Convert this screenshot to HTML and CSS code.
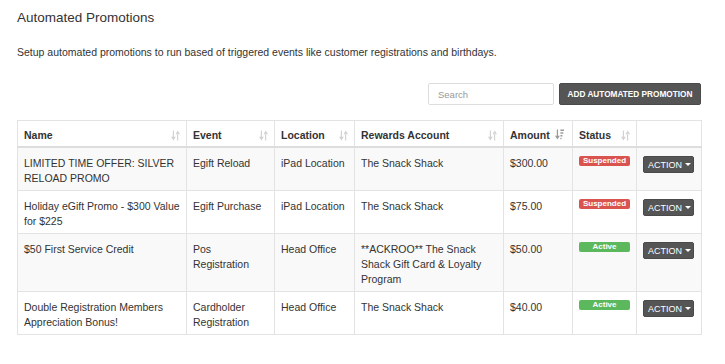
FILE: index.html
```html
<!DOCTYPE html>
<html lang="en">
<head>
  <meta charset="UTF-8">
  <title>Automated Promotions</title>
  <link rel="stylesheet" href="styles.css">
</head>
<body>
  <div class="page">
    <h1 class="page-title">Automated Promotions</h1>
    <p class="page-desc">Setup automated promotions to run based of triggered events like customer registrations and birthdays.</p>

    <div class="toolbar">
      <input class="search" type="text" placeholder="Search">
      <button class="btn-add">ADD AUTOMATED PROMOTION</button>
    </div>

    <table class="promo-table">
      <colgroup>
        <col style="width: 169px">
        <col style="width: 88px">
        <col style="width: 80px">
        <col style="width: 149px">
        <col style="width: 69px">
        <col style="width: 64px">
        <col style="width: 65px">
      </colgroup>
      <thead>
        <tr>
          <th>Name <svg class="sort" viewBox="0 0 10 11"><path d="M2 0h1.3v7.5h-1.3z M0 7h5.3l-2.65 4z M6.7 3.5h1.3v7.5h-1.3z M5 4h5l-2.5-4z"/></svg></th>
          <th>Event <svg class="sort" viewBox="0 0 10 11"><path d="M2 0h1.3v7.5h-1.3z M0 7h5.3l-2.65 4z M6.7 3.5h1.3v7.5h-1.3z M5 4h5l-2.5-4z"/></svg></th>
          <th>Location <svg class="sort" viewBox="0 0 10 11"><path d="M2 0h1.3v7.5h-1.3z M0 7h5.3l-2.65 4z M6.7 3.5h1.3v7.5h-1.3z M5 4h5l-2.5-4z"/></svg></th>
          <th>Rewards Account <svg class="sort" viewBox="0 0 10 11"><path d="M2 0h1.3v7.5h-1.3z M0 7h5.3l-2.65 4z M6.7 3.5h1.3v7.5h-1.3z M5 4h5l-2.5-4z"/></svg></th>
          <th>Amount <svg class="sort-active" viewBox="0 0 10 11"><path d="M2 0h1.4v7.5h-1.4z M0 7h5.4l-2.7 4z M6 0h4v1.7h-4z M6 3h3.2v1.7h-3.2z M6 6h2.2v1.7h-2.2z M6 9h1.2v1.7h-1.2z"/></svg></th>
          <th>Status <svg class="sort" viewBox="0 0 10 11"><path d="M2 0h1.3v7.5h-1.3z M0 7h5.3l-2.65 4z M6.7 3.5h1.3v7.5h-1.3z M5 4h5l-2.5-4z"/></svg></th>
          <th></th>
        </tr>
      </thead>
      <tbody>
        <tr>
          <td>LIMITED TIME OFFER: SILVER RELOAD PROMO</td>
          <td>Egift Reload</td>
          <td>iPad Location</td>
          <td>The Snack Shack</td>
          <td>$300.00</td>
          <td><span class="label label-danger">Suspended</span></td>
          <td><button class="btn-action">ACTION <span class="caret"></span></button></td>
        </tr>
        <tr>
          <td>Holiday eGift Promo - $300 Value for $225</td>
          <td>Egift Purchase</td>
          <td>iPad Location</td>
          <td>The Snack Shack</td>
          <td>$75.00</td>
          <td><span class="label label-danger">Suspended</span></td>
          <td><button class="btn-action">ACTION <span class="caret"></span></button></td>
        </tr>
        <tr>
          <td>$50 First Service Credit</td>
          <td>Pos Registration</td>
          <td>Head Office</td>
          <td>**ACKROO** The Snack Shack Gift Card &amp; Loyalty Program</td>
          <td>$50.00</td>
          <td><span class="label label-success">Active</span></td>
          <td><button class="btn-action">ACTION <span class="caret"></span></button></td>
        </tr>
        <tr>
          <td>Double Registration Members Appreciation Bonus!</td>
          <td>Cardholder Registration</td>
          <td>Head Office</td>
          <td>The Snack Shack</td>
          <td>$40.00</td>
          <td><span class="label label-success">Active</span></td>
          <td><button class="btn-action">ACTION <span class="caret"></span></button></td>
        </tr>
      </tbody>
    </table>
  </div>
</body>
</html>
```

FILE: styles.css
```css
body {
  margin: 0;
  font-family: "Liberation Sans", Arial, sans-serif;
  color: #333;
  background: #fff;
}
.page {
  padding: 8px 24px 0 17px;
}
.page-title {
  margin: 0;
  font-size: 13.5px;
  font-weight: normal;
  line-height: 20px;
}
.page-desc {
  margin: 17px 0 0;
  font-size: 10.5px;
  line-height: 15px;
}
.toolbar {
  display: flex;
  justify-content: flex-end;
  align-items: center;
  gap: 5px;
  margin-top: 23px;
}
.search {
  width: 126px;
  height: 22px;
  box-sizing: border-box;
  border: 1px solid #ddd;
  border-radius: 2px;
  padding: 0 9px;
  font-family: inherit;
  font-size: 9.5px;
  color: #333;
}
.search::placeholder {
  color: #999;
}
.btn-add {
  height: 22px;
  width: 142px;
  padding: 0;
  border: 1px solid #4a4a4a;
  border-radius: 2px;
  background: #555;
  color: #fff;
  font-family: inherit;
  font-size: 8.25px;
  font-weight: bold;
  cursor: pointer;
}
.promo-table {
  margin-top: 15px;
  width: 685px;
  table-layout: fixed;
  border-collapse: collapse;
  font-size: 10.5px;
  line-height: 15px;
}
.promo-table th,
.promo-table td {
  border: 1px solid #e3e3e3;
  text-align: left;
  vertical-align: top;
}
.promo-table th {
  padding: 7px 6px 3px;
  font-weight: bold;
  border-bottom: 2px solid #ddd;
  white-space: nowrap;
}
.promo-table td {
  padding: 8px 6px 4px;
}
.promo-table tbody tr:nth-child(odd) {
  background: #f9f9f9;
}
.sort {
  float: right;
  width: 9px;
  height: 11px;
  margin-top: 2px;
  fill: #d2d2d2;
}
.sort-active {
  width: 9px;
  height: 11px;
  margin-left: 2px;
  vertical-align: -1px;
  fill: #9a9a9a;
}
.label {
  display: block;
  height: 10px;
  border-radius: 2px;
  color: #fff;
  font-size: 8px;
  font-weight: bold;
  line-height: 10px;
  text-align: center;
}
.label-danger {
  background: #d9534f;
}
.label-success {
  background: #5cb85c;
}
.btn-action {
  display: block;
  width: 51px;
  height: 17px;
  padding: 0 0 0 4px;
  border: 1px solid #4a4a4a;
  border-radius: 2px;
  background: #555;
  color: #fff;
  font-family: inherit;
  font-size: 9px;
  text-align: left;
  white-space: nowrap;
  cursor: pointer;
}
.caret {
  display: inline-block;
  width: 0;
  height: 0;
  margin-left: 0;
  vertical-align: 2px;
  border-top: 3px solid #fff;
  border-left: 3px solid transparent;
  border-right: 3px solid transparent;
}
```
